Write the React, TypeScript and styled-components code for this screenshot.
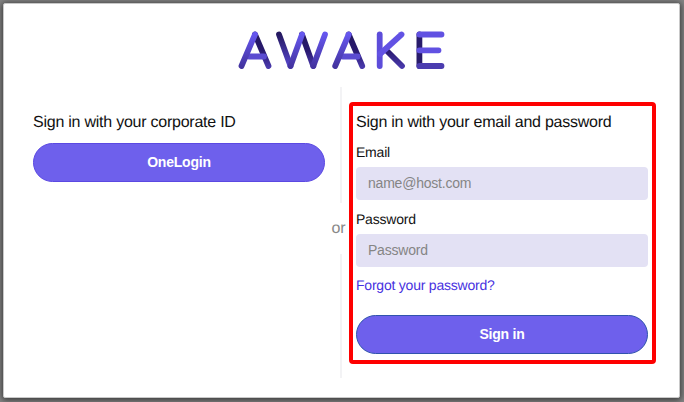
import React from "react";
import styled, { createGlobalStyle, css } from "styled-components";

const GlobalStyle = createGlobalStyle`
  * { box-sizing: border-box; }
  body {
    margin: 0;
    background: #858585;
    font-family: "Liberation Sans", Arial, sans-serif;
    color: #111;
    text-rendering: geometricPrecision;
  }
`;

const Page = styled.div`
  width: 684px;
  height: 402px;
  padding: 3px 4px 4px 3px;
  overflow: hidden;
`;

const Card = styled.main`
  height: 395px;
  display: flex;
  flex-direction: column;
  background: #fff;
  border: 1px solid #c9c9c9;
  border-radius: 2px;
  box-shadow: 0 1px 6px 1px rgba(0, 0, 0, 0.6);
`;

const Header = styled.header`
  height: 83px;
  padding: 25px 0 0 234px;
`;

const Columns = styled.div`
  display: flex;
  height: 291px;
`;

const Corporate = styled.section`
  width: 321px;
  padding: 25px 0 0 29px;
`;

const Separator = styled.div`
  width: 24px;
  display: flex;
  flex-direction: column;
  align-items: center;
  padding-left: 7px;
`;

const Rule = styled.div<{ $height: number }>`
  width: 2px;
  height: ${(p) => p.$height}px;
  flex-shrink: 0;
  background: #f3f3f5;
`;

const Or = styled.span`
  height: 51px;
  line-height: 51px;
  font-size: 16px;
  color: #888;
  margin-left: -4px;
`;

const EmailForm = styled.form`
  width: 307px;
  height: 262px;
  margin-top: 15px;
  padding: 6px 4px 0 3px;
  border: 4px solid #fe0000;
  border-radius: 4px;
`;

const Title = styled.h2`
  margin: 0;
  height: 31px;
  line-height: 22px;
  font-size: 16px;
  letter-spacing: -0.24px;
  font-weight: 400;
  white-space: nowrap;
`;

const Label = styled.label`
  display: block;
  height: 24px;
  line-height: 18px;
  font-size: 14px;
  letter-spacing: -0.22px;
`;

const Field = styled.input`
  display: block;
  width: 292px;
  height: 33px;
  margin: 0 0 10px;
  padding: 0 12px 1px;
  border: 0;
  border-radius: 4px;
  background: #e3e1f4;
  font: 14px "Liberation Sans", Arial, sans-serif;
  letter-spacing: -0.22px;
  &::placeholder { color: #858585; opacity: 1; }
`;

const Forgot = styled.a`
  display: block;
  height: 38px;
  line-height: 17px;
  font-size: 14px;
  letter-spacing: -0.22px;
  color: #4731e0;
  text-decoration: none;
`;

const Button = styled.button<{ $focused?: boolean }>`
  display: block;
  width: 292px;
  height: 39px;
  padding: 0 0 2px;
  border: 1px solid #5b49e2;
  border-radius: 20px;
  background: #6e60ec;
  color: #fff;
  font: bold 14px "Liberation Sans", Arial, sans-serif;
  letter-spacing: -0.22px;
  ${(p) => p.$focused && css`border-color: #3053ad;`}
`;

const LetterA = ({ x }: { x: number }) => (
  <g transform={`translate(${x} 0)`}>
    <path d="M17 5.5 30.5 37" stroke="url(#dark)" />
    <path d="M11 27.5H26" stroke="#5b4bd1" />
    <path d="M3.5 37 17 5.5" stroke="url(#rise)" />
  </g>
);

const Logo = () => (
  <svg width="212" height="43" viewBox="0 0 212 43" fill="none" strokeWidth="5.8" strokeLinecap="round" strokeLinejoin="round" role="img" aria-label="Awake">
    <defs>
      <linearGradient id="rise" gradientUnits="userSpaceOnUse" x1="0" y1="38" x2="0" y2="5">
        <stop stopColor="#43339f" />
        <stop offset="1" stopColor="#6657ef" />
      </linearGradient>
      <linearGradient id="dark" gradientUnits="userSpaceOnUse" x1="0" y1="5" x2="0" y2="38">
        <stop stopColor="#24185e" />
        <stop offset=".5" stopColor="#29196f" />
        <stop offset="1" stopColor="#4939ab" />
      </linearGradient>
      <linearGradient id="fall" gradientUnits="userSpaceOnUse" x1="0" y1="5" x2="0" y2="38">
        <stop stopColor="#251960" />
        <stop offset="1" stopColor="#5747cf" />
      </linearGradient>
    </defs>
    <LetterA x={0} />
    <path d="M41 5.5 52.5 37" stroke="url(#fall)" />
    <path d="M64 5.5 75.3 37" stroke="url(#dark)" />
    <path d="M52.5 37 64 5.5" stroke="url(#rise)" />
    <path d="M75.3 37 87 5.5" stroke="url(#rise)" />
    <LetterA x={93.7} />
    <path d="M148 21 164 37" stroke="url(#dark)" />
    <path d="M141.7 5.5V37" stroke="#5d4dda" />
    <path d="M142 25 163.5 5.5" stroke="#6252e4" />
    <path d="M181.4 5.5V37" stroke="#281b6b" />
    <path d="M181.4 5.5H203.5M181.4 21.3H200.5" stroke="#6151e2" />
    <path d="M181.4 37H203.5" stroke="#4b3caf" />
  </svg>
);

export default function App() {
  return (
    <>
      <GlobalStyle />
      <Page>
        <Card>
          <Header><Logo /></Header>
          <Columns>
            <Corporate>
              <Title>Sign in with your corporate ID</Title>
              <Button type="button">OneLogin</Button>
            </Corporate>
            <Separator>
              <Rule $height={116} />
              <Or>or</Or>
              <Rule $height={124} />
            </Separator>
            <EmailForm>
              <Title>Sign in with your email and password</Title>
              <Label htmlFor="email">Email</Label>
              <Field id="email" type="email" placeholder="name@host.com" />
              <Label htmlFor="password">Password</Label>
              <Field id="password" type="password" placeholder="Password" />
              <Forgot href="#">Forgot your password?</Forgot>
              <Button type="button" $focused>Sign in</Button>
            </EmailForm>
          </Columns>
        </Card>
      </Page>
    </>
  );
}
